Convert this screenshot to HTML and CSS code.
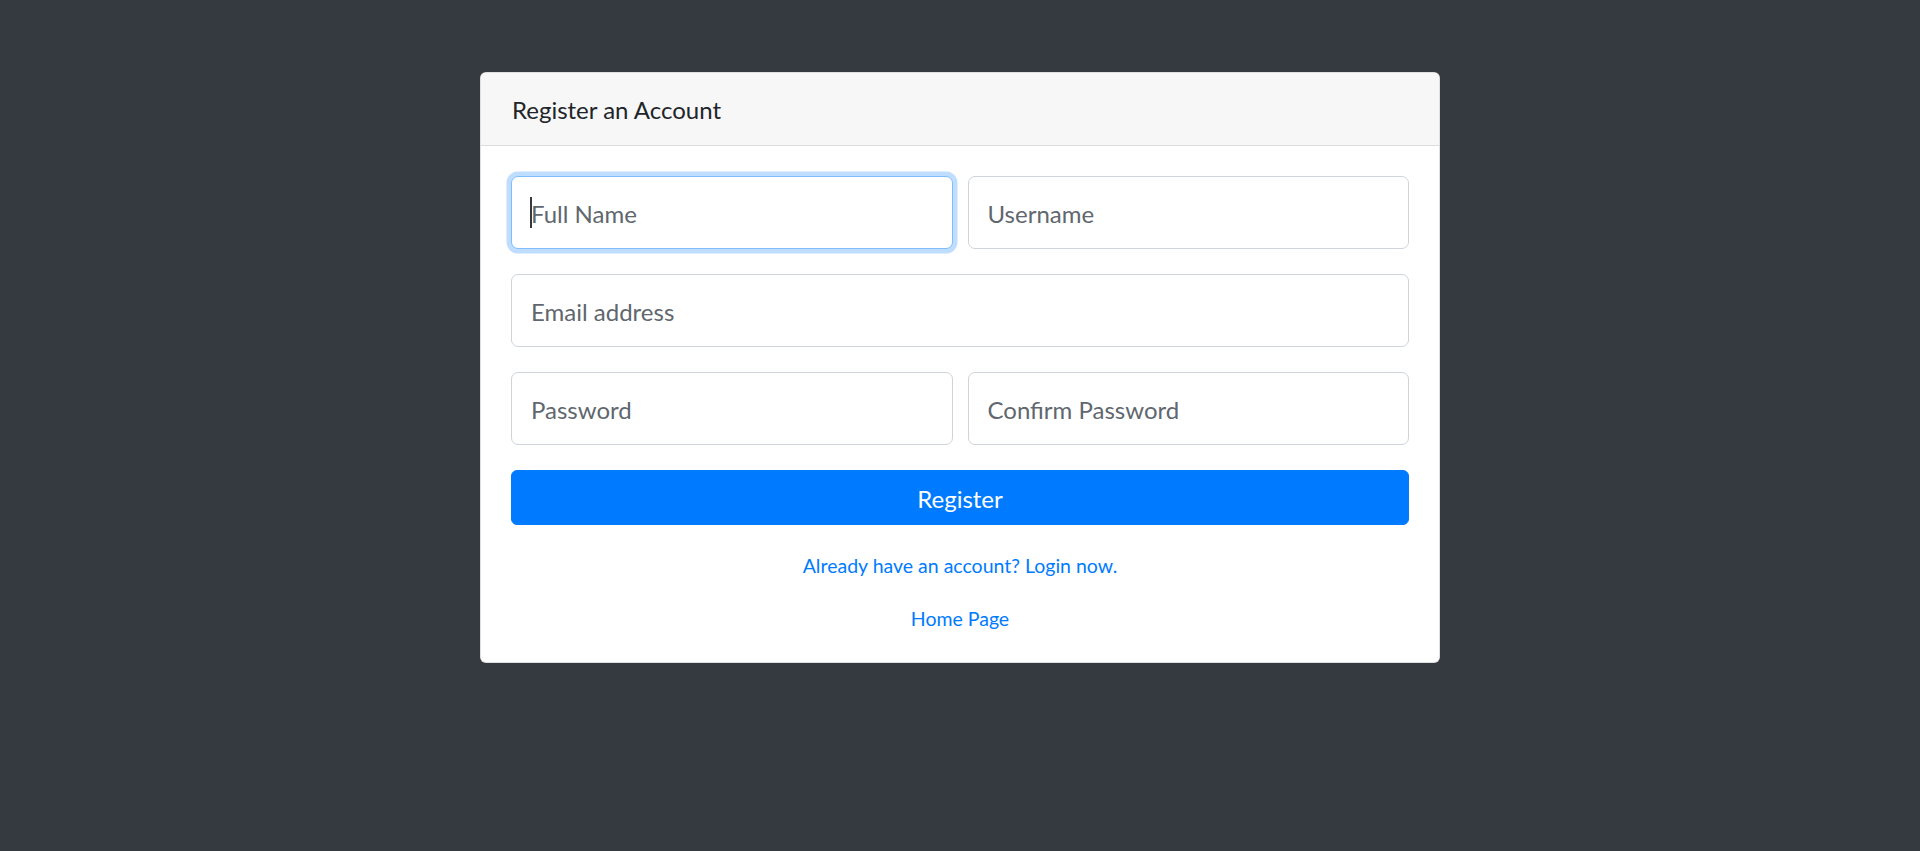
FILE: index.html
```html
<!DOCTYPE html>
<html lang="en">
<head>
<meta charset="utf-8">
<title>Register an Account</title>
<link rel="stylesheet" href="styles.css">
</head>
<body>
<main class="page">
  <section class="card">
    <header class="card-header">Register an Account</header>
    <form class="card-body">
      <div class="row">
        <div class="field is-focused">
          <input class="control" type="text" placeholder="Full Name">
          <span class="caret"></span>
        </div>
        <div class="field">
          <input class="control" type="text" placeholder="Username">
        </div>
      </div>
      <div class="row">
        <div class="field">
          <input class="control" type="email" placeholder="Email address">
        </div>
      </div>
      <div class="row">
        <div class="field">
          <input class="control" type="password" placeholder="Password">
        </div>
        <div class="field">
          <input class="control" type="password" placeholder="Confirm Password">
        </div>
      </div>
      <button class="btn" type="button">Register</button>
      <div class="links">
        <a class="link" href="#">Already have an account? Login now.</a>
        <a class="link" href="#">Home Page</a>
      </div>
    </form>
  </section>
</main>
</body>
</html>
```
FILE: styles.css
```css
* { box-sizing: border-box; }

html, body {
  margin: 0;
  height: 100%;
}

body {
  background: #343a40;
  font-family: Lato, "Open Sans", sans-serif;
  color: #212529;
}

.page {
  padding-top: 72px;
}

.card {
  width: 960px;
  margin: 0 auto;
  background: #fff;
  border: 1px solid rgba(0, 0, 0, 0.125);
  border-radius: 6px;
  overflow: hidden;
}

.card-header {
  height: 73px;
  padding: 2px 31px 0;
  display: flex;
  align-items: center;
  font-size: 24px;
  line-height: 36px;
  color: #212529;
  background: #f7f7f7;
  border-bottom: 1px solid #dcdcdc;
}

.card-body {
  padding: 30px 30px 28px;
  display: flex;
  flex-direction: column;
}

.row {
  display: flex;
  gap: 15px;
  margin-bottom: 25px;
}

.field {
  flex: 1 1 0;
  position: relative;
}

.control {
  display: block;
  width: 100%;
  height: 73px;
  padding: 2px 19px 0;
  font-family: inherit;
  font-size: 24px;
  color: #495057;
  background: #fff;
  border: 1px solid #ced4da;
  border-radius: 7px;
  outline: none;
}

.control::placeholder {
  color: #60676e;
  opacity: 1;
}

.is-focused .control {
  border-color: #80bdff;
  box-shadow: 0 0 0 4.5px rgba(0, 123, 255, 0.25);
}

.caret {
  position: absolute;
  left: 19px;
  top: 21px;
  width: 2px;
  height: 31px;
  background: #343a40;
}

.btn {
  display: block;
  width: 100%;
  height: 55px;
  padding: 1px 0 0;
  font-family: inherit;
  font-size: 24px;
  color: #fff;
  background: #007bff;
  border: 1px solid #007bff;
  border-radius: 6px;
  cursor: pointer;
}

.links {
  display: flex;
  flex-direction: column;
  align-items: center;
  gap: 23px;
  margin-top: 26px;
}

.link {
  font-size: 19.5px;
  line-height: 30px;
  color: #007bff;
  text-decoration: none;
}
```
